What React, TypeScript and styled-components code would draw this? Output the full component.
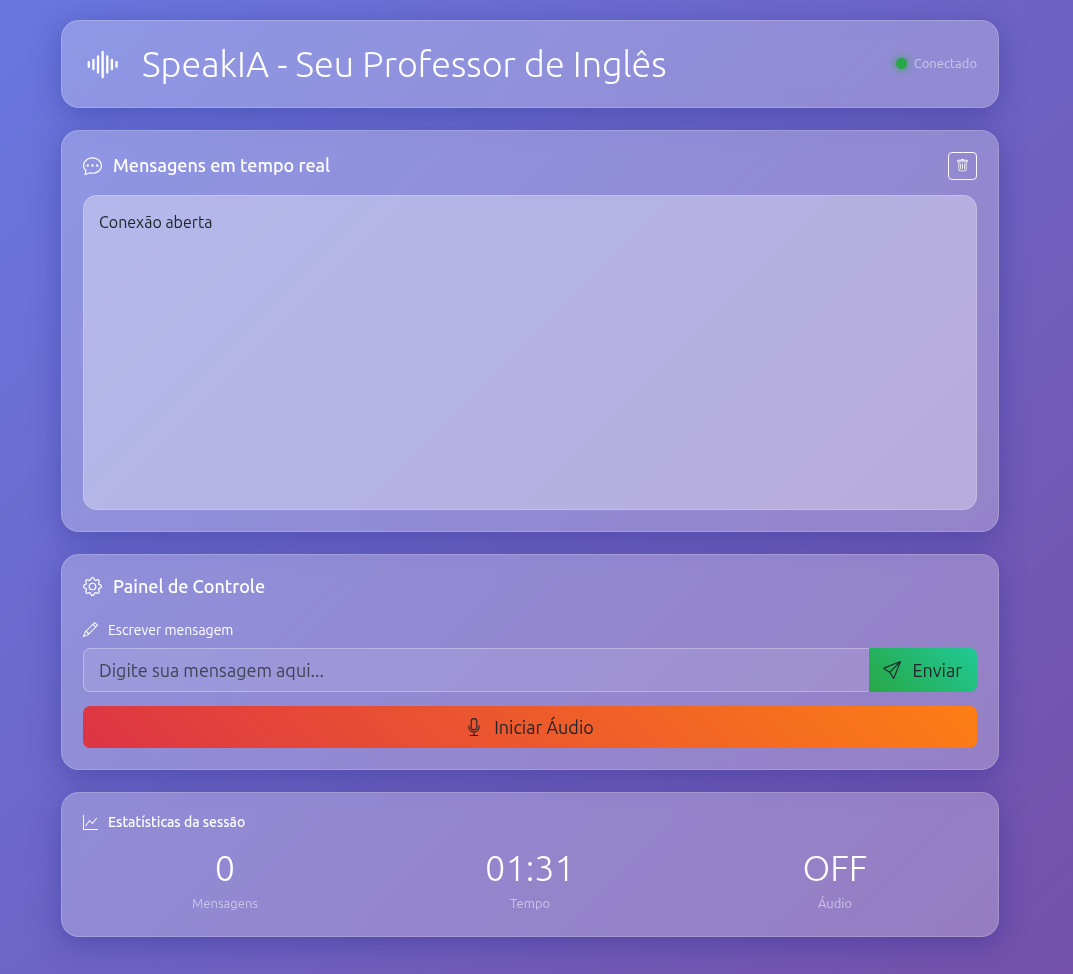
import React, { useState } from 'react';
import styled, { createGlobalStyle } from 'styled-components';
import { BsChatDots, BsGear, BsGraphUp, BsMic, BsPencil, BsSend, BsSoundwave, BsTrash } from 'react-icons/bs';

const GlobalStyle = createGlobalStyle`
  *, *::before, *::after { box-sizing: border-box; }
  html { height: 100%; }
  body {
    margin: 0;
    min-height: 100vh;
    background: linear-gradient(135deg, #6877df 0%, #7450aa 100%);
    font-family: Ubuntu, "Open Sans", "Noto Sans", sans-serif;
    font-weight: 400;
    font-size: 16px;
    line-height: 24px;
    color: #212529;
  }
  h1, h2, p, dl, dd { margin: 0; }
  button, input { font: inherit; color: inherit; }
  svg { flex: none; display: block; }
`;

const Page = styled.main`
  display: flex;
  flex-direction: column;
  gap: 22px;
  padding: 20px 74px 37px 61px;
`;

const Card = styled.section`
  padding: 21px;
  border: 1px solid rgba(255, 255, 255, 0.18);
  border-radius: 18px;
  background: rgba(255, 255, 255, 0.25);
  box-shadow: 0 7px 29px rgba(31, 38, 135, 0.37);
  backdrop-filter: blur(7px);
`;

const HeaderBar = styled.header`
  display: flex;
  align-items: center;
  justify-content: space-between;
  min-height: 44px;
`;

const Title = styled.h1`
  display: flex;
  align-items: center;
  gap: 22px;
  font-size: 36px;
  font-weight: 300;
  line-height: 44px;
  color: #fff;
`;

const Status = styled.div`
  display: flex;
  align-items: center;
  gap: 7px;
  padding-bottom: 2px;
  font-size: 13px;
  line-height: 20px;
  color: rgba(255, 255, 255, 0.5);
`;

const Dot = styled.span`
  width: 11px;
  height: 11px;
  border-radius: 50%;
  background: #28a745;
  box-shadow: 0 0 9px #28a745;
`;

const SectionHead = styled.div`
  display: flex;
  align-items: center;
  justify-content: space-between;
  margin-bottom: 15px;
`;

const Heading = styled.h2<{ $small?: boolean }>`
  display: flex;
  align-items: center;
  gap: ${p => (p.$small ? 10 : 11)}px;
  padding-bottom: 2px;
  font-size: ${p => (p.$small ? 14 : 18)}px;
  font-weight: 500;
  line-height: ${p => (p.$small ? 16 : 20)}px;
  color: #fff;
`;

const ClearButton = styled.button`
  display: flex;
  align-items: center;
  justify-content: center;
  width: 29px;
  height: 28px;
  padding: 0 1px 2px 0;
  border: 1px solid #f8f9fa;
  border-radius: 4px;
  background: none;
  color: #f8f9fa;
  cursor: pointer;
`;

const MessageLog = styled.div`
  height: 315px;
  padding: 14px 15px;
  overflow-y: auto;
  border: 1px solid rgba(255, 255, 255, 0.2);
  border-radius: 14px;
  background: rgba(255, 255, 255, 0.33);
`;

const Form = styled.form`
  margin-top: 21px;
`;

const FieldLabel = styled.label`
  display: flex;
  align-items: center;
  gap: 10px;
  margin-bottom: 7px;
  font-size: 14px;
  line-height: 22px;
  color: #fff;

  svg {
    margin-bottom: 2px;
  }
`;

const InputGroup = styled.div`
  display: flex;
  margin-bottom: 14px;
`;

const TextInput = styled.input`
  flex: 1;
  min-width: 0;
  height: 44px;
  padding: 0 15px;
  border: 1px solid rgba(255, 255, 255, 0.3);
  border-right: 0;
  border-radius: 7px 0 0 7px;
  background: rgba(255, 255, 255, 0.1);
  font-size: 18px;
  outline: none;

  &::placeholder {
    color: rgba(33, 37, 41, 0.75);
    opacity: 1;
  }
`;

const ActionButton = styled.button<{ $wide?: boolean }>`
  display: flex;
  align-items: center;
  justify-content: center;
  gap: 11px;
  width: ${p => (p.$wide ? '100%' : 'auto')};
  height: ${p => (p.$wide ? 42 : 44)}px;
  padding: 0 15px 0 14px;
  border: 0;
  border-radius: ${p => (p.$wide ? '7px' : '0 7px 7px 0')};
  background: ${p =>
    p.$wide ? 'linear-gradient(45deg, #dc3545, #fd7e14)' : 'linear-gradient(45deg, #28a745, #20c997)'};
  font-size: 18px;
  line-height: 26px;
  color: #212529;
  cursor: pointer;
`;

const Stats = styled.dl`
  display: grid;
  grid-template-columns: repeat(3, 1fr);
  gap: 21px;
  margin-top: 14px;
  text-align: center;
`;

const Stat = styled.div`
  display: flex;
  flex-direction: column-reverse;
`;

const StatValue = styled.dd`
  font-size: 36px;
  font-weight: 300;
  line-height: 44px;
  color: #fff;
`;

const StatLabel = styled.dt`
  margin: 3px 0 2px;
  font-size: 13px;
  line-height: 20px;
  color: rgba(255, 255, 255, 0.5);
`;

const initialMessages = ['Conexão aberta'];

export default function App() {
  const [messages, setMessages] = useState(initialMessages);
  const [draft, setDraft] = useState('');
  const [audio, setAudio] = useState(false);

  const stats = [
    { label: 'Mensagens', value: '0' },
    { label: 'Tempo', value: '01:31' },
    { label: 'Áudio', value: audio ? 'ON' : 'OFF' },
  ];

  const send = (event: React.FormEvent) => {
    event.preventDefault();
    if (!draft.trim()) return;
    setMessages([...messages, draft]);
    setDraft('');
  };

  return (
    <>
      <GlobalStyle />
      <Page>
        <Card>
          <HeaderBar>
            <Title>
              <BsSoundwave size={37} />
              SpeakIA - Seu Professor de Inglês
            </Title>
            <Status>
              <Dot />
              Conectado
            </Status>
          </HeaderBar>
        </Card>

        <Card>
          <SectionHead>
            <Heading>
              <BsChatDots size={19} />
              Mensagens em tempo real
            </Heading>
            <ClearButton type="button" aria-label="Limpar mensagens" onClick={() => setMessages([])}>
              <BsTrash size={13} />
            </ClearButton>
          </SectionHead>
          <MessageLog>
            {messages.map((message, index) => (
              <p key={index}>{message}</p>
            ))}
          </MessageLog>
        </Card>

        <Card>
          <Heading>
            <BsGear size={19} />
            Painel de Controle
          </Heading>
          <Form onSubmit={send}>
            <FieldLabel htmlFor="message">
              <BsPencil size={15} />
              Escrever mensagem
            </FieldLabel>
            <InputGroup>
              <TextInput
                id="message"
                type="text"
                placeholder="Digite sua mensagem aqui..."
                value={draft}
                onChange={event => setDraft(event.target.value)}
              />
              <ActionButton type="submit">
                <BsSend size={18} />
                Enviar
              </ActionButton>
            </InputGroup>
            <ActionButton $wide type="button" onClick={() => setAudio(!audio)}>
              <BsMic size={18} />
              Iniciar Áudio
            </ActionButton>
          </Form>
        </Card>

        <Card>
          <Heading $small>
            <BsGraphUp size={15} />
            Estatísticas da sessão
          </Heading>
          <Stats>
            {stats.map(stat => (
              <Stat key={stat.label}>
                <StatLabel>{stat.label}</StatLabel>
                <StatValue>{stat.value}</StatValue>
              </Stat>
            ))}
          </Stats>
        </Card>
      </Page>
    </>
  );
}
